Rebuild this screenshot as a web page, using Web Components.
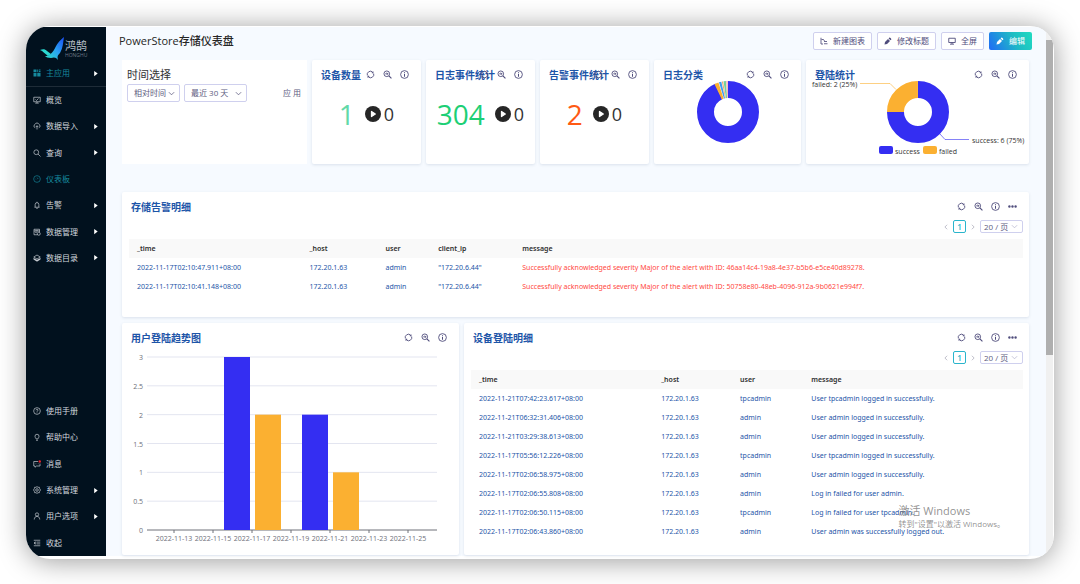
<!DOCTYPE html>
<html lang="zh-CN">
<head>
<meta charset="utf-8">
<meta name="viewport" content="width=device-width, initial-scale=1">
<title>PowerStore存储仪表盘</title>
<style>
  html { height: 100%; }
  body {
    margin: 0; min-height: 100%; box-sizing: border-box; padding: 26px; display: flex; background: #fff;
    font-family: "Open Sans", "Noto Sans CJK SC", sans-serif; font-size: 7px; color: #333;
    --ink: #4f4d7c; --title: #1d55a8; --line: #cfd0ee; --teal: #2ab5cc;
  }
  app-window { flex: 1; }
</style>
</head>
<body>
<app-window>
  <side-nav slot="nav"></side-nav>
  <dash-board></dash-board>
</app-window>

<script>
const RESET = `:host,*{box-sizing:border-box} h1,h2,button,select{margin:0;padding:0} button,select{font:inherit;color:inherit;background:none;border:0;appearance:none} a{color:inherit;text-decoration:none} svg{display:block}`;

/* Base class: clones the given markup into an open shadow root. */
class Base extends HTMLElement {
  connectedCallback() {
    if (this.shadowRoot) return;
    const t = document.createElement('template');
    t.innerHTML = `<style>${RESET}${this.css()}</style>${this.html()}`;
    this.attachShadow({ mode: 'open' }).append(t.content.cloneNode(true));
  }
  css() { return ''; }
  html() { return ''; }
}

const ICONS = {
  apps: '<path fill="currentColor" stroke="none" d="M1 1h6v5H1zM1 7.500h6V15H1zM8.500 7.500H15V15H8.500zM8.500 1h2v5h-2zM12 1h3v2h-3zM12 4h3v2h-3z"/>',
  overview: '<path d="M1.500 2.500h13v9h-13zM8 11.500V14M4.500 14.300h7M5 7l2 2 4-4"/>',
  cloud: '<path d="M4.500 11.500a3.500 3.500 0 0 1-.5-6.600 4.200 4.200 0 0 1 8 0 3.500 3.500 0 0 1-.5 6.600M8 15V7.500M5.500 10 8 7.500l2.500 2.500"/>',
  search: '<circle cx="6.500" cy="6.500" r="4.800"/><path d="m10 10 5 5"/>',
  gauge: '<circle cx="8" cy="8" r="6.700"/><path d="M8 8.500 10.500 6M4 8h.8M8 4v.8"/>',
  bell: '<path d="M3 12.500h10M4.300 12.500V7a3.700 3.700 0 0 1 7.400 0v5.500M8 1.500v1.800M6.500 14.700h3"/>',
  data: '<path d="M9 13.500H2v-11h11V8M4.500 5.500h6M2 6h11M4.500 9h3"/><circle cx="11.500" cy="11.500" r="3"/>',
  layers: '<path d="m8 2 6.500 4L8 10 1.500 6z"/><path fill="currentColor" d="M1.500 9 8 12.500 14.500 9v1.500L8 14.500l-6.500-4z"/>',
  help: '<circle cx="8" cy="8" r="6.700"/><path d="M6 6.500C6 4 10 4 10 6.300 10 8 8 7.800 8 9.500M8 11v1.200"/>',
  bulb: '<path d="M6 12c0-2-2-2.500-2-5.500a4 4 0 0 1 8 0c0 3-2 3.500-2 5.500zM6.300 14.800h3.400"/>',
  message: '<path d="M10 3H1.500v9H4v2.500L7 12h7V7M4.500 7.500h.8M7.500 7.500h.8M10.500 7.500h.8"/><circle cx="13.500" cy="3" r="2.500" fill="#e8202a" stroke="none"/>',
  gear: '<path d="m8 1 2 1.700 2.700-.2.600 2.700L15 8l-1.700 2.600-.6 2.800-2.700-.1L8 15l-2-1.700-2.700.1-.6-2.800L1 8l1.700-2.800.6-2.700 2.700.2z"/><circle cx="8" cy="8" r="2.600"/>',
  user: '<circle cx="8" cy="5" r="3.300"/><path d="M2.500 15c0-8.500 11-8.500 11 0"/>',
  fold: '<path d="M1.500 2.500h13M7 6.200h7.500M7 9.800h7.500M1.500 13.500h13M4.500 5.500 2 8l2.500 2.500z"/>',
  refresh: '<path d="M2.300 9.500A5.900 5.900 0 0 1 11.500 3.300M13.700 6.500A5.900 5.900 0 0 1 4.500 12.700" stroke-width="1.600"/><path fill="currentColor" stroke="none" d="M13.200 2v4.200L9.500 5.200zM2.800 14V9.800l3.700 1z"/>',
  zoom: '<circle cx="6.700" cy="6.700" r="5" stroke-width="1.600"/><path d="m10.500 10.500 4.500 4.500" stroke-width="2"/><path d="M4 6.700h5M6.700 4.700l2 2-2 2" stroke-width="1.500"/>',
  info: '<circle cx="8" cy="8" r="6.900" stroke-width="1.600"/><path d="M8 7v5M8 4v1.700" stroke-width="1.800"/>',
  more: '<g fill="currentColor" stroke="none"><circle cx="2.500" cy="8" r="2.100"/><circle cx="8" cy="8" r="2.100"/><circle cx="13.500" cy="8" r="2.100"/></g>',
  down: '<path d="m2 5 6 6 6-6" stroke-width="1.800"/>',
  left: '<path d="M11 2 5 8l6 6" stroke-width="2"/>',
  right: '<path d="m5 2 6 6-6 6" stroke-width="2"/>',
  caret: '<path fill="currentColor" stroke="none" d="M5 2v12l8-6z"/>',
  chart: '<path d="M2 1.500v12.500h4M3 5h4l2 3M8 9h6M8 13.500h7" stroke-width="1.700"/>',
  pen: '<path fill="currentColor" stroke="none" d="m1 15 1-5 6-6 4 4-6 6zM9.200 2.900l1.700-1.700c.9-.7 4.500 2.800 3.800 3.800L13.100 6.700z"/>',
  screen: '<path d="M1.500 2.500h13v8.500h-13zM8 11v3M4 14.300h8" stroke-width="1.800"/>',
  play: '<circle cx="8" cy="8" r="8" fill="#262626" stroke="none"/><path fill="#fff" stroke="#fff" stroke-linejoin="round" d="M6.500 5.500v5L10.300 8z"/>'
};
customElements.define('ui-icon', class extends Base {
  css() { return `:host{display:block;flex:none;width:var(--size,8px);height:var(--size,8px)} svg{width:100%;height:100%}`; }
  html() { return `<svg viewBox="0 0 16 16" fill="none" stroke="currentColor" stroke-width="1.300" aria-hidden="true">${ICONS[this.getAttribute('name')] || ''}</svg>`; }
});

customElements.define('app-window', class extends Base {
  css() { return `
    :host{display:flex;background:#fff;border-radius:24px;box-shadow:0 2px 28px rgba(0,0,0,.4);overflow:hidden;padding:1px 1px 3px 0;min-width:0}
    ::slotted(*){min-width:0}
    .track{flex:none;width:7px;background:#f0f0f0;padding-top:13px}
    .thumb{height:61%;background:#afafaf}`; }
  html() { return `<slot name="nav"></slot><slot></slot><div class="track"><div class="thumb"></div></div>`; }
});

customElements.define('nav-item', class extends Base {
  css() { return `
    :host{display:block;color:#d3d8de}
    :host([active]){color:#168a9e}
    a{display:flex;align-items:center;height:100%;padding:0 7px;gap:5px;font-size:8px;line-height:12px}
    span{flex:1;white-space:nowrap}
    .go{color:#fff;--size:7px}`; }
  html() { return `<a href="#"><ui-icon name="${this.getAttribute('icon')}"></ui-icon><span><slot></slot></span>${this.hasAttribute('more') ? '<ui-icon class="go" name="caret"></ui-icon>' : ''}</a>`; }
});

customElements.define('side-nav', class extends Base {
  css() { return `
    :host{flex:none;width:80px;background:#01111e;display:flex;flex-direction:column}
    .logo{display:flex;align-items:center;height:33px;padding:10px 0 0 14px;gap:1px}
    .logo b{display:block;font-size:11px;line-height:12px;font-weight:400;color:#b9c1cb}
    .logo small{display:block;font-size:5px;line-height:6px;color:#6f7a86}
    .main{height:27px;border-bottom:1px solid #1e2c38}
    .group{display:grid;grid-auto-rows:1fr;height:184px}
    .foot{height:158px;margin-top:auto}`; }
  html() {
    const items = l => l.map(([i, t, m, a]) => `<nav-item icon="${i}"${m ? ' more' : ''}${a ? ' active' : ''}>${t}</nav-item>`).join('');
    return `
    <div class="logo">
      <svg width="24" height="24" viewBox="0 0 24 24" aria-hidden="true">
        <defs><linearGradient id="a" x1="1" y1="0" x2="0" y2="1"><stop offset="0" stop-color="#1b4df5"/><stop offset=".5" stop-color="#2aa3f2"/><stop offset="1" stop-color="#2be3c4"/></linearGradient></defs>
        <path fill="#2bd8d0" d="M0 13c3-1 5-1 7 1l4 3-3 2c-3-2-5-5-8-6z"/>
        <path fill="url(#a)" d="M24 0c-1 6-1 11-4 16-2 2-3 3-2 7-2-3-4-3-7-2-3 0-5-1-6-2 4 0 6-2 9-6C17 7 19 4 24 0z"/>
      </svg>
      <div><b>鸿鹄</b><small>HONGHU</small></div>
    </div>
    <nav-item class="main" icon="apps" more active>主应用</nav-item>
    <nav class="group">${items([['overview', '概览'], ['cloud', '数据导入', 1], ['search', '查询', 1], ['gauge', '仪表板', 0, 1], ['bell', '告警', 1], ['data', '数据管理', 1], ['layers', '数据目录', 1]])}</nav>
    <nav class="group foot">${items([['help', '使用手册'], ['bulb', '帮助中心'], ['message', '消息'], ['gear', '系统管理', 1], ['user', '用户选项', 1], ['fold', '收起']])}</nav>`;
  }
});

customElements.define('tool-button', class extends Base {
  css() { return `
    :host{display:block;color:var(--ink)}
    button{display:flex;align-items:center;gap:5px;height:18px;padding:0 6px;border:1px solid var(--line);border-radius:2px;background:#fff;font-size:8px;line-height:12px;white-space:nowrap}
    :host([primary]){color:#fff}
    :host([primary]) button{border-color:transparent;background:linear-gradient(60deg,#1f6bf6,#1fbcc4 60%,#20dcc0) border-box}`; }
  html() { return `<button type="button"><ui-icon name="${this.getAttribute('icon')}"></ui-icon><slot></slot></button>`; }
});

customElements.define('drop-down', class extends Base {
  css() { return `
    :host{display:block;color:#5d5c80}
    label{display:grid;align-items:center}
    select,ui-icon{grid-area:1/1}
    select{width:100%;height:var(--h,18px);border:1px solid var(--line);border-radius:2px;background:#fff;padding:0 10px 0 var(--pad,6px);font-size:8px;line-height:12px}
    ui-icon{justify-self:end;margin-right:5px;--size:7px;pointer-events:none;color:var(--arrow,#5d5c80)}`; }
  html() { return `<label><select aria-label="${this.getAttribute('label')}"><option>${this.getAttribute('value')}</option></select><ui-icon name="down"></ui-icon></label>`; }
});

customElements.define('panel-card', class extends Base {
  css() { return `
    :host{display:flex;flex-direction:column;position:relative;min-width:0;background:#fff;border-radius:2px;box-shadow:0 1px 3px rgba(40,60,110,.13)}
    header{display:flex;align-items:center;height:29px;padding-left:9px}
    h2{font-size:10px;line-height:14px;font-weight:700;color:var(--title);white-space:nowrap}
    .tools{position:absolute;right:12px;top:10px;display:flex;gap:8px;color:var(--ink)}
    .tools button{display:block}
    ui-icon{--size:9px}`; }
  html() {
    const tools = [['refresh', '刷新'], ['zoom', '查看'], ['info', '信息']];
    if (this.hasAttribute('more')) tools.push(['more', '更多']);
    return `<header><h2>${this.getAttribute('heading')}</h2><div class="tools">${tools.map(([i, l]) => `<button type="button" aria-label="${l}"><ui-icon name="${i}"></ui-icon></button>`).join('')}</div></header><slot></slot>`;
  }
});

customElements.define('stat-value', class extends Base {
  css() { return `
    :host{display:flex;align-items:center;justify-content:center;height:50px}
    strong{font-size:28px;line-height:30px;font-weight:400;color:${this.getAttribute('color')};margin-right:10px}
    ui-icon{--size:16px;margin-right:3px}
    span{font-size:18px;line-height:20px}`; }
  html() { return `<strong>${this.getAttribute('value')}</strong><ui-icon name="play"></ui-icon><span>0</span>`; }
});

/* Ring chart; slices are fractions of the whole, drawn clockwise from the top. */
function ring(cx, cy, slices) {
  const r = 22.5, c = 2 * Math.PI * r;
  let at = 0;
  return slices.map(([f, color]) => {
    const s = `<circle cx="${cx}" cy="${cy}" r="${r}" fill="none" stroke="${color}" stroke-width="17" stroke-dasharray="${f * c - .3} ${c}" transform="rotate(${at * 360 - 90} ${cx} ${cy})"/>`;
    at += f;
    return s;
  }).join('');
}
const CHART = `:host{display:block} svg{overflow:visible} text{font-size:7px;fill:#333}`;
const BLUE = '#342ef2', AMBER = '#fbb031';

customElements.define('log-ring', class extends Base {
  css() { return CHART + `svg{margin:-9px auto 0}`; }
  html() { return `<svg width="62" height="64" viewBox="0 0 62 64" role="img" aria-label="日志分类">${ring(31, 32, [[.928, BLUE], [.025, AMBER], [.015, '#3f9bf0'], [.009, '#f5a96c'], [.015, '#74d39b'], [.008, '#f58ba0']])}</svg>`; }
});

customElements.define('login-ring', class extends Base {
  css() { return CHART + `svg{width:100%;height:84px;margin-top:-9px}`; }
  html() { return `<svg viewBox="0 20 223 84" role="img" aria-label="登陆统计">
    ${ring(112, 52, [[.75, BLUE], [.25, AMBER]])}
    <path d="M54 23.500h30l6 6" fill="none" stroke="${AMBER}" stroke-opacity=".6"/>
    <path d="M134 74l5 5.500h24" fill="none" stroke="${BLUE}" stroke-opacity=".6"/>
    <text x="6" y="27">failed: 2 (25%)</text>
    <text x="166" y="83">success: 6 (75%)</text>
    <rect x="73" y="86" width="14" height="8" rx="2" fill="${BLUE}"/><text x="89" y="94">success</text>
    <rect x="117" y="86" width="14" height="8" rx="2" fill="${AMBER}"/><text x="133" y="94">failed</text></svg>`; }
});

customElements.define('trend-chart', class extends Base {
  css() { return CHART + `svg{width:100%;margin-top:-2px} text{fill:#6e7079}`; }
  html() {
    const y = v => 180 - v * 173 / 3;
    const grid = [0, .5, 1, 1.5, 2, 2.5, 3].map(v => `<path d="M25 ${y(v)}h290" stroke="${v ? '#e3e5f0' : '#6e7079'}"/><text x="21" y="${y(v) + 3}" text-anchor="end">${v}</text>`).join('');
    const ticks = [13, 15, 17, 19, 21, 23, 25].map((d, i) => { const x = 52 + i * 39; return `<path d="M${x} 180v3" stroke="#6e7079"/><text x="${x}" y="191" text-anchor="middle">2022-11-${d}</text>`; }).join('');
    const bars = [[102, 3, BLUE], [133, 2, AMBER], [180, 2, BLUE], [211, 1, AMBER]].map(([x, v, c]) => `<rect x="${x}" y="${y(v)}" width="26" height="${180 - y(v)}" fill="${c}"/>`).join('');
    return `<svg viewBox="0 0 337 205" role="img" aria-label="用户登陆趋势图">${grid}${bars}${ticks}</svg>`;
  }
});

customElements.define('page-nav', class extends Base {
  css() { return `
    :host{display:flex;align-items:center;justify-content:flex-end;gap:4px;height:13px;margin:-1px 6px 0;color:#a9a9b8}
    ui-icon{--size:6px}
    .now{width:13px;height:13px;border:1px solid var(--teal);border-radius:2px;color:var(--teal);font-size:8px;line-height:11px;font-weight:600}
    drop-down{width:43px;--h:13px;--pad:3px;--arrow:#b9b9d0}`; }
  html() { return `<button type="button" aria-label="上一页"><ui-icon name="left"></ui-icon></button><button type="button" class="now">1</button><button type="button" aria-label="下一页"><ui-icon name="right"></ui-icon></button><drop-down label="每页条数" value="20 / 页"></drop-down>`; }
});

customElements.define('data-table', class extends Base {
  css() { return `
    :host{display:block;padding:6px 6px 0 7px;font-family:"Noto Sans","Noto Sans CJK SC",sans-serif}
    table{width:100%;border-collapse:collapse;table-layout:fixed}
    th,td{height:19px;padding:0 0 0 8px;text-align:left;font-size:7px;line-height:10px;white-space:nowrap}
    th{background:#f9f9f9;font-weight:600;color:#2e2e2e}
    td{color:#1d55a8}
    :host([alert]) td:last-child{color:#ff4a3f}`; }
  html() {
    const { widths, head, rows } = TABLES[this.getAttribute('source')];
    return `<table><colgroup>${widths.map(w => `<col style="width:${w}">`).join('')}</colgroup>
      <thead><tr>${head.map(h => `<th scope="col">${h}</th>`).join('')}</tr></thead>
      <tbody>${rows.map(r => `<tr>${r.map(c => `<td>${c}</td>`).join('')}</tr>`).join('')}</tbody></table>`;
  }
});

const IP = '172.20.1.63';
const login = (t, u, m) => [t + '+08:00', IP, u, m];
const TABLES = {
  alerts: {
    widths: ['19.3%', '8.5%', '5.9%', '9.4%', 'auto'],
    head: ['_time', '_host', 'user', 'client_ip', 'message'],
    rows: [
      ['2022-11-17T02:10:47.911+08:00', IP, 'admin', '"172.20.6.44"', 'Successfully acknowledged severity Major of the alert with ID: 46aa14c4-19a8-4e37-b5b6-e5ce40d89278.'],
      ['2022-11-17T02:10:41.148+08:00', IP, 'admin', '"172.20.6.44"', 'Successfully acknowledged severity Major of the alert with ID: 50758e80-48eb-4096-912a-9b0621e994f7.']
    ]
  },
  logins: {
    widths: ['33%', '14.3%', '12.9%', 'auto'],
    head: ['_time', '_host', 'user', 'message'],
    rows: [
      login('2022-11-21T07:42:23.617', 'tpcadmin', 'User tpcadmin logged in successfully.'),
      login('2022-11-21T06:32:31.406', 'admin', 'User admin logged in successfully.'),
      login('2022-11-21T03:29:38.613', 'admin', 'User admin logged in successfully.'),
      login('2022-11-17T05:56:12.226', 'tpcadmin', 'User tpcadmin logged in successfully.'),
      login('2022-11-17T02:06:58.975', 'admin', 'User admin logged in successfully.'),
      login('2022-11-17T02:06:55.808', 'admin', 'Log in failed for user admin.'),
      login('2022-11-17T02:06:50.115', 'tpcadmin', 'Log in failed for user tpcadmin.'),
      login('2022-11-17T02:06:43.860', 'admin', 'User admin was successfully logged out.')
    ]
  }
};

customElements.define('time-filter', class extends Base {
  css() { return `
    :host{display:block;background:#fff;padding:6px 5px;min-width:0}
    h2{font-size:11px;line-height:18px;font-weight:400;color:#333}
    .row{display:flex;gap:4px}
    .rel{width:53px}.range{width:63px}
    button{margin-left:auto;padding-right:1px;font-size:8px;line-height:12px;color:#5d5c80}`; }
  html() { return `<h2>时间选择</h2><div class="row"><drop-down class="rel" label="时间类型" value="相对时间"></drop-down><drop-down class="range" label="时间范围" value="最近 30 天"></drop-down><button type="button">应 用</button></div>`; }
});

customElements.define('dash-board', class extends Base {
  css() { return `
    :host{flex:1;display:flex;flex-direction:column;position:relative;background:#f6faff}
    .top{display:flex;align-items:center;justify-content:space-between;height:27px;padding:0 14px 0 13px}
    h1{font-size:11px;line-height:16px;font-weight:500;color:#262626}
    .actions{display:flex;gap:5px}
    .body{flex:1;display:flex;flex-direction:column;padding:6px 17px 1px 16px}
    .row{display:grid;gap:5px}
    .stats{grid-template-columns:185fr 109fr 109fr 109fr 147fr 223fr;grid-template-rows:104px;margin-bottom:28px}
    .alerts{margin-bottom:6px;min-height:125px}
    .detail{flex:1;grid-template-columns:337fr 565fr}
    .mark{position:absolute;right:41px;bottom:26px;color:rgba(110,110,110,.75);font-size:8px;line-height:12px}
    .mark b{display:block;font-size:11px;line-height:14px;font-weight:400}`; }
  html() { return `
    <div class="top"><h1>PowerStore存储仪表盘</h1>
      <div class="actions"><tool-button icon="chart">新建图表</tool-button><tool-button icon="pen">修改标题</tool-button><tool-button icon="screen">全屏</tool-button><tool-button icon="pen" primary>编辑</tool-button></div></div>
    <div class="body">
      <div class="row stats">
        <time-filter></time-filter>
        <panel-card heading="设备数量"><stat-value value="1" color="#62d9a8"></stat-value></panel-card>
        <panel-card heading="日志事件统计"><stat-value value="304" color="#1dcf75"></stat-value></panel-card>
        <panel-card heading="告警事件统计"><stat-value value="2" color="#ff5a14"></stat-value></panel-card>
        <panel-card heading="日志分类"><log-ring></log-ring></panel-card>
        <panel-card heading="登陆统计"><login-ring></login-ring></panel-card>
      </div>
      <panel-card class="alerts" heading="存储告警明细" more><page-nav></page-nav><data-table source="alerts" alert></data-table></panel-card>
      <div class="row detail">
        <panel-card heading="用户登陆趋势图"><trend-chart></trend-chart></panel-card>
        <panel-card heading="设备登陆明细" more><page-nav></page-nav><data-table source="logins"></data-table></panel-card>
      </div>
    </div>
    <div class="mark"><b>激活 Windows</b>转到"设置"以激活 Windows。</div>`; }
});
</script>
</body>
</html>
